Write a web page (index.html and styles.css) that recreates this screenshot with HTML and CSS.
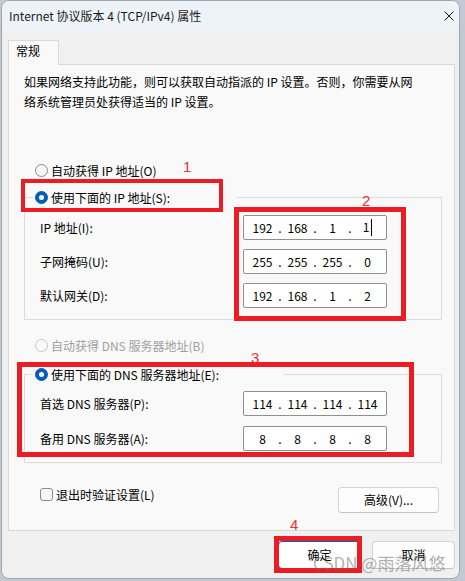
FILE: index.html
```html
<!DOCTYPE html>
<html lang="zh-CN">
<head>
<meta charset="utf-8">
<title>Internet 协议版本 4 (TCP/IPv4) 属性</title>
<link rel="stylesheet" href="styles.css">
</head>
<body>
<div class="window">
  <div class="titlebar">
    <span class="title">Internet 协议版本 4 (TCP/IPv4) 属性</span>
    <svg class="close" width="10" height="10" viewBox="0 0 10 10"><path d="M0.5 0.5L9.5 9.5M9.5 0.5L0.5 9.5" stroke="#1a1a1a" stroke-width="1" fill="none"/></svg>
  </div>
  <div class="client">
    <div class="tabs"><div class="tab">常规</div></div>
    <div class="panel">
      <p class="desc">如果网络支持此功能，则可以获取自动指派的 IP 设置。否则，你需要从网<br>络系统管理员处获得适当的 IP 设置。</p>

      <div class="radio-row first"><span class="radio"></span>自动获得 IP 地址(O)</div>
      <fieldset class="group group-ip">
        <legend class="legend legend-ip"><span class="radio checked"></span>使用下面的 IP 地址(S):</legend>
        <div class="field-row"><span class="label">IP 地址(I):</span>
          <div class="ipbox"><span class="oct">192</span><span class="dot">.</span><span class="oct">168</span><span class="dot">.</span><span class="oct">1</span><span class="dot">.</span><span class="oct">1<span class="caret"></span></span></div>
        </div>
        <div class="field-row"><span class="label">子网掩码(U):</span>
          <div class="ipbox"><span class="oct">255</span><span class="dot">.</span><span class="oct">255</span><span class="dot">.</span><span class="oct">255</span><span class="dot">.</span><span class="oct">0</span></div>
        </div>
        <div class="field-row"><span class="label">默认网关(D):</span>
          <div class="ipbox"><span class="oct">192</span><span class="dot">.</span><span class="oct">168</span><span class="dot">.</span><span class="oct">1</span><span class="dot">.</span><span class="oct">2</span></div>
        </div>
      </fieldset>

      <div class="radio-row dns-auto disabled"><span class="radio"></span>自动获得 DNS 服务器地址(B)</div>
      <fieldset class="group group-dns">
        <legend class="legend legend-dns"><span class="radio checked"></span>使用下面的 DNS 服务器地址(E):</legend>
        <div class="field-row"><span class="label">首选 DNS 服务器(P):</span>
          <div class="ipbox"><span class="oct">114</span><span class="dot">.</span><span class="oct">114</span><span class="dot">.</span><span class="oct">114</span><span class="dot">.</span><span class="oct">114</span></div>
        </div>
        <div class="field-row"><span class="label">备用 DNS 服务器(A):</span>
          <div class="ipbox"><span class="oct">8</span><span class="dot">.</span><span class="oct">8</span><span class="dot">.</span><span class="oct">8</span><span class="dot">.</span><span class="oct">8</span></div>
        </div>
      </fieldset>

      <div class="bottom-row">
        <div class="check-row"><span class="checkbox"></span>退出时验证设置(L)</div>
        <button class="btn btn-adv">高级(V)...</button>
      </div>
    </div>
    <div class="buttons">
      <button class="btn btn-ok">确定</button>
      <button class="btn btn-cancel">取消</button>
    </div>
  </div>
</div>

<div class="mark mark-1"></div>
<div class="mark mark-2"></div>
<div class="mark mark-3"></div>
<div class="mark mark-4"></div>
<span class="num num-1">1</span>
<span class="num num-2">2</span>
<span class="num num-3">3</span>
<span class="num num-4">4</span>
<span class="watermark">CSDN @雨落风悠</span>
</body>
</html>
```

FILE: styles.css
```css
* { box-sizing: border-box; }
html, body { margin: 0; padding: 0; }
body {
  width: 465px;
  height: 581px;
  background: #c3c9d1;
  font-family: "Noto Sans CJK SC", "Noto Sans", sans-serif;
  font-size: 12px;
  color: #000;
  position: relative;
  overflow: hidden;
}

.window {
  margin-left: 1px;
  width: 459px;
  height: 579px;
  border: 1px solid #a3a7ad;
  border-radius: 8px;
  background: #f0f0f0;
  overflow: hidden;
  display: flex;
  flex-direction: column;
}

.titlebar {
  height: 30px;
  flex: none;
  background: #eef3fa;
  display: flex;
  align-items: center;
  justify-content: space-between;
  padding: 0 5px 0 7px;
}
.title { line-height: 16px; color: #1b1b1b; }
.close { display: block; }

.client { flex: 1; padding: 9px 0 0 6px; }

.tabs { display: flex; }
.tab {
  width: 51px;
  height: 25px;
  border: 1px solid #d9d9d9;
  border-bottom: none;
  background: #f9f9f9;
  padding-left: 7px;
  line-height: 20px;
  margin-bottom: -1px;
  position: relative;
  z-index: 1;
}

.panel {
  width: 447px;
  border: 1px solid #d9d9d9;
  background: #f9f9f9;
  padding: 7px 0 17px 15px;
}

.desc { margin: 0; line-height: 20px; white-space: nowrap; }

.radio-row {
  display: flex;
  align-items: center;
  height: 20px;
  padding-left: 11px;
  white-space: nowrap;
}
.radio-row.first { margin-top: 48px; }
.radio-row.dns-auto { margin-top: 15px; }
.radio-row.disabled { color: #a0a0a0; }

.radio {
  width: 13px;
  height: 13px;
  border-radius: 50%;
  border: 1px solid #8b8b8b;
  background: #f6f6f6;
  margin-right: 3px;
  flex: none;
  display: inline-flex;
  align-items: center;
  justify-content: center;
}
.disabled .radio { border-color: #c8c8c8; background: #f9f9f9; }
.radio.checked { background: #005fb8; border-color: #005fb8; }
.radio.checked::after {
  content: "";
  width: 5px;
  height: 5px;
  border-radius: 50%;
  background: #fff;
}

.group {
  margin: 0;
  width: 418px;
  border: 1px solid #dcdcdc;
  padding: 8px 0 11px 8px;
  min-width: 0;
}
.group-ip { margin-top: 7px; }
.group-dns { margin-top: 9px; padding-top: 7px; }

.legend {
  display: flex;
  align-items: center;
  height: 20px;
  padding: 0 0 0 2px;
  white-space: nowrap;
}
.legend-ip { width: 203px; }
.legend-dns { width: 250px; }

.field-row {
  display: flex;
  align-items: center;
  height: 25px;
  margin-left: 7px;
}
.field-row + .field-row { margin-top: 9px; }
.group-dns .field-row + .field-row { margin-top: 10px; }
.label { width: 203px; flex: none; white-space: nowrap; }

.ipbox {
  width: 144px;
  height: 25px;
  flex: none;
  border: 1px solid #8f8f8f;
  border-radius: 2px;
  background: #fff;
  display: flex;
  align-items: center;
  padding-left: 4px;
  line-height: 16px;
}
.oct { width: 29px; text-align: center; flex: none; white-space: nowrap; }
.dot { width: 6px; text-align: center; flex: none; }
.caret {
  display: inline-block;
  width: 1px;
  height: 17px;
  background: #000;
  margin-left: 2px;
  vertical-align: -4px;
}

.bottom-row {
  display: flex;
  justify-content: space-between;
  align-items: flex-start;
  margin-top: 21px;
  width: 418px;
}
.check-row {
  display: flex;
  align-items: center;
  height: 20px;
  padding-left: 16px;
  white-space: nowrap;
}
.checkbox {
  width: 13px;
  height: 13px;
  border: 1px solid #8b8b8b;
  border-radius: 3px;
  background: #f6f6f6;
  margin-right: 3px;
  flex: none;
}

.btn {
  font-family: "Noto Sans CJK SC", "Noto Sans", sans-serif;
  font-size: 12px;
  color: #000;
  background: #fdfdfd;
  border: 1px solid #d3d3d3;
  border-bottom-color: #c4c4c4;
  border-radius: 4px;
  padding: 0;
  line-height: 16px;
}
.btn-adv { width: 101px; height: 26px; margin-top: 3px; margin-right: 3px; }

.buttons {
  width: 447px;
  display: flex;
  justify-content: flex-end;
  gap: 11px;
  margin-top: 10px;
}
.btn-ok, .btn-cancel { width: 83px; height: 28px; }
.btn-ok { border-color: #0067c0; background: #ffffff; }

/* red annotation overlays */
.mark {
  position: absolute;
  border: 5px solid #ec1c24;
}
.mark-1 { left: 21px; top: 179px; width: 202px; height: 33px; border-width: 4px; }
.mark-2 { left: 234px; top: 207px; width: 172px; height: 114px; }
.mark-3 { left: 17px; top: 362px; width: 397px; height: 95px; }
.mark-4 { left: 274px; top: 536px; width: 88px; height: 37px; }

.num {
  position: absolute;
  font-family: "Liberation Sans", sans-serif;
  font-size: 15px;
  line-height: 15px;
  color: #e8323a;
}
.num-1 { left: 183px; top: 159px; }
.num-2 { left: 362px; top: 193px; }
.num-3 { left: 251px; top: 350px; }
.num-4 { left: 290px; top: 517px; }

.watermark {
  position: absolute;
  left: 313px;
  top: 553px;
  font-size: 17px;
  line-height: 20px;
  color: rgba(110, 110, 110, 0.55);
  white-space: nowrap;
}
```
